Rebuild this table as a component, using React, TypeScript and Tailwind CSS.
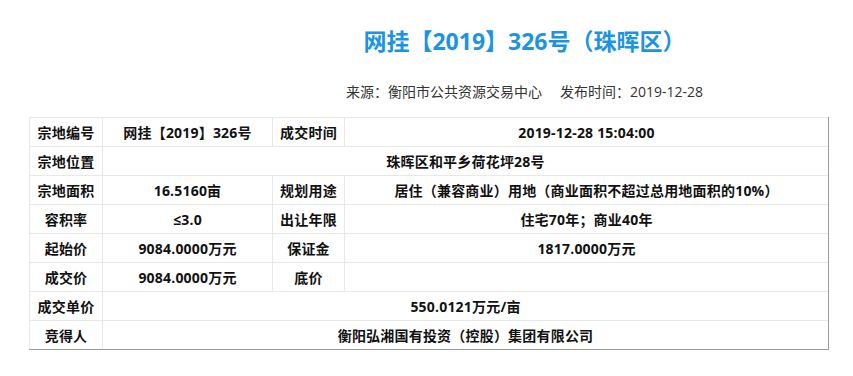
import React from 'react';

type Cell = { text: string; span?: boolean; label?: boolean };

const rows: Cell[][] = [
  [
    { text: '宗地编号', label: true },
    { text: '网挂【2019】326号' },
    { text: '成交时间', label: true },
    { text: '2019-12-28 15:04:00' },
  ],
  [{ text: '宗地位置', label: true }, { text: '珠晖区和平乡荷花坪28号', span: true }],
  [
    { text: '宗地面积', label: true },
    { text: '16.5160亩' },
    { text: '规划用途', label: true },
    { text: '居住（兼容商业）用地（商业面积不超过总用地面积的10%）' },
  ],
  [
    { text: '容积率', label: true },
    { text: '≤3.0' },
    { text: '出让年限', label: true },
    { text: '住宅70年；商业40年' },
  ],
  [
    { text: '起始价', label: true },
    { text: '9084.0000万元' },
    { text: '保证金', label: true },
    { text: '1817.0000万元' },
  ],
  [
    { text: '成交价', label: true },
    { text: '9084.0000万元' },
    { text: '底价', label: true },
    { text: '' },
  ],
  [{ text: '成交单价', label: true }, { text: '550.0121万元/亩', span: true }],
  [{ text: '竞得人', label: true }, { text: '衡阳弘湘国有投资（控股）集团有限公司', span: true }],
];

const App: React.FC = () => {
  return (
    <div
      className="w-[853px] h-[376px] bg-white text-[#111] overflow-hidden"
      style={{ fontFamily: '"Open Sans", "Noto Sans CJK SC", sans-serif' }}
    >
      {/* Header */}
      <div className="pl-[196px] pt-[26px] text-center">
        <h1 className="text-[23px] leading-[30px] font-bold text-[#1c93e3]">网挂【2019】326号（珠晖区）</h1>
        <div className="mt-[27px] text-[14px] leading-[18px] text-[#333] flex justify-center gap-[18px]">
          <span>来源：衡阳市公共资源交易中心</span>
          <span>发布时间：2019-12-28</span>
        </div>
      </div>

      {/* Detail table */}
      <div className="ml-[29px] mt-[16px] w-[800px] border-r border-b border-[#9a9a9a] grid grid-cols-[73px_170px_72px_484px]">
        {rows.map((row, i) =>
          row.map((cell, j) => (
            <div
              key={`${i}-${j}`}
              className={`h-[29px] border-l border-t border-[#e8e8e8] flex items-center justify-center text-[14px] font-bold whitespace-nowrap tracking-[0.2px] ${
                cell.span ? 'col-span-3' : ''
              }`}
            >
              {cell.text}
            </div>
          ))
        )}
      </div>
    </div>
  );
};

export default App;
